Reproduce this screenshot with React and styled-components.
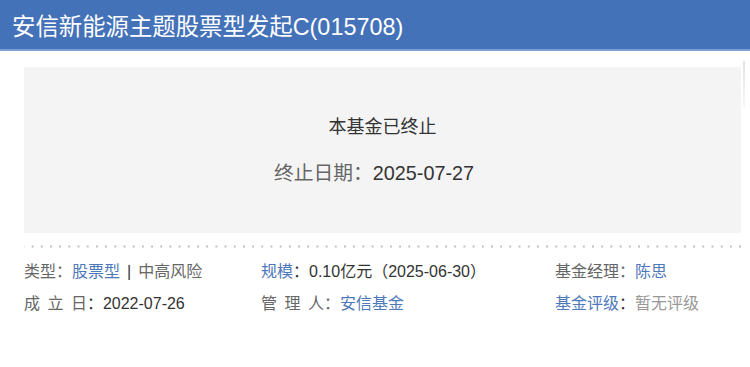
import React from 'react'
import styled, { createGlobalStyle } from 'styled-components'

const GlobalStyle = createGlobalStyle`
  body {
    margin: 0;
    background: #fff;
    font-family: "Liberation Sans", "Noto Sans CJK SC", sans-serif;
  }
`

const Header = styled.div`
  height: 49px;
  background: #4472b9;
  border-bottom: 2px solid #7d9fd3;
  display: flex;
  align-items: center;
  padding-left: 12px;
  color: #fff;
  font-size: 23.4px;
`

const Page = styled.div`
  padding: 16px 5px 0 24px;
  display: flex;
  gap: 2px;
`

const Main = styled.div`
  width: 718px;
`

const SideLine = styled.div`
  width: 2px;
  height: 46px;
  margin-top: -6px;
  background: linear-gradient(#e3e3e3, #f7f7f7);
`

const Notice = styled.div`
  height: 166px;
  background: #f4f4f4;
  display: flex;
  flex-direction: column;
  align-items: center;
  padding-top: 48px;
  box-sizing: border-box;
  color: #333;
`

const NoticeTitle = styled.div`
  font-size: 18px;
  line-height: 24px;
`

const NoticeDate = styled.div`
  margin-top: 21px;
  margin-right: 17px;
  font-size: 19.8px;
  line-height: 26px;
  color: #333;
`

const Gray = styled.span`
  color: ${p => p.$light ? '#999' : '#666'};
  word-spacing: ${p => p.$spaced ? '3px' : 'normal'};
`

const Dots = styled.div`
  margin-top: 12px;
  height: 3px;
  background-image: radial-gradient(circle, #bdbdbd 1px, transparent 1.2px);
  background-size: 9.2px 3px;
  background-position: 4px 0;
`

const Info = styled.div`
  display: grid;
  grid-template-columns: 237px 294px 1fr;
  row-gap: 11px;
  margin-top: 13px;
  font-size: 16px;
  color: #333;
  line-height: 21px;
`

const Cell = styled.div`
  white-space: nowrap;
`

const Link = styled.span`
  color: #4d78ba;
`

const Sep = styled.span`
  margin: 0 7px;
  color: #333;
`

export default function App() {
  return (
    <>
      <GlobalStyle />
      <Header>安信新能源主题股票型发起C(015708)</Header>
      <Page>
        <Main>
          <Notice>
            <NoticeTitle>本基金已终止</NoticeTitle>
            <NoticeDate><Gray>终止日期：</Gray>2025-07-27</NoticeDate>
          </Notice>
          <Dots />
          <Info>
            <Cell><Gray>类型：</Gray><Link>股票型</Link><Sep>|</Sep><Gray>中高风险</Gray></Cell>
            <Cell><Link>规模</Link>：0.10亿元（2025-06-30）</Cell>
            <Cell><Gray>基金经理：</Gray><Link>陈思</Link></Cell>
            <Cell><Gray $spaced>成 立 日</Gray>：2022-07-26</Cell>
            <Cell><Gray $spaced>管 理 人：</Gray><Link>安信基金</Link></Cell>
            <Cell><Link>基金评级</Link>：<Gray $light>暂无评级</Gray></Cell>
          </Info>
        </Main>
        <SideLine />
      </Page>
    </>
  )
}
